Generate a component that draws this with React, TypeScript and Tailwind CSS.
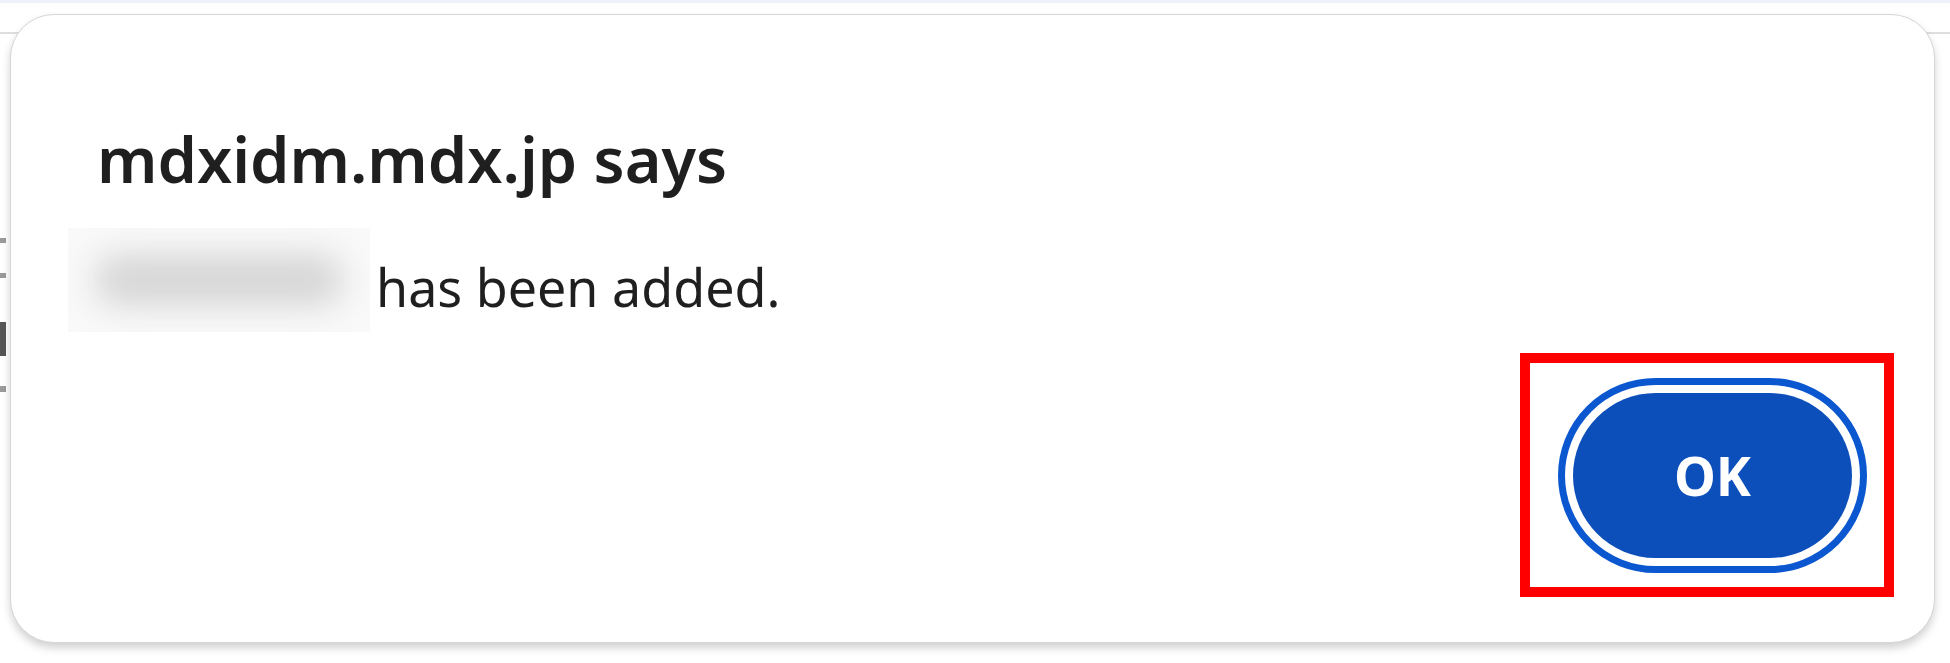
import React from 'react';

const font = { fontFamily: '"Noto Sans", "Open Sans", sans-serif' };

const BlurredName: React.FC = () => (
  <div className="-ml-[29px] w-[302px] h-[104px] shrink-0 bg-[#f9f9f9] flex items-center justify-center overflow-hidden">
    <div className="w-[250px] h-[52px] rounded-full bg-[#d6d6d6] blur-[16px]" />
  </div>
);

const AlertDialog: React.FC<{ origin: string; message: string }> = ({ origin, message }) => (
  <div
    className="absolute left-[10px] top-[14px] w-[1925px] h-[629px] bg-white rounded-[44px] border border-[#d6d6d6] shadow-[0_5px_8px_rgba(0,0,0,0.18)] flex flex-col pt-[106px] pl-[86px] pr-[40px] pb-[45px]"
    style={font}
  >
    <h1 className="text-[63px] leading-[76px] font-semibold text-[#1f1f1f]">{origin} says</h1>
    <div className="flex items-start mt-[31px]">
      <BlurredName />
      <span className="ml-[6px] text-[52px] leading-[104px] mt-[7px] text-[#1f1f1f]">{message}</span>
    </div>
    <div className="flex-1 flex items-end justify-end">
      {/* highlight box round the focused button */}
      <div className="border-[10px] border-[#ff0000] pl-[28px] pr-[17px] pt-[15px] pb-[14px]">
        <button className="w-[309px] h-[195px] rounded-full border-[7px] border-[#0b57d0] p-[8px] flex">
          <span className="flex-1 rounded-full bg-[#0c4fbb] flex items-center justify-center text-white text-[53px] font-bold leading-none">
            OK
          </span>
        </button>
      </div>
    </div>
  </div>
);

export default function App() {
  return (
    <div className="relative w-[1950px] h-[663px] bg-white overflow-hidden" style={font}>
      <div className="h-[3px] bg-[#edf2fa]" />
      <div className="mt-[29px] h-[2px] bg-[#dedede]" />
      {/* bits of the page peeking out at the left edge */}
      <div className="flex flex-col gap-[30px] pt-[204px] w-[6px]">
        <div className="h-[5px] bg-[#9a9a9a]" />
        <div className="h-[5px] bg-[#9a9a9a]" />
        <div className="h-[34px] mt-[14px] bg-[#555555]" />
        <div className="h-[6px] bg-[#9a9a9a]" />
      </div>
      <AlertDialog origin="mdxidm.mdx.jp" message="has been added." />
    </div>
  );
}
